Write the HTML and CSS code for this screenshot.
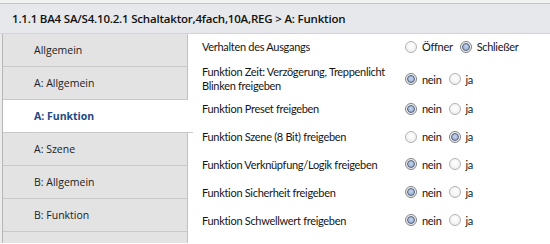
FILE: index.html
```html
<!DOCTYPE html>
<html lang="de">
<head>
<meta charset="utf-8">
<link rel="stylesheet" href="styles.css">
</head>
<body>
<div class="top-strip"></div>
<div class="header">1.1.1 BA4 SA/S4.10.2.1 Schaltaktor,4fach,10A,REG &gt; A: Funktion</div>
<div class="main">
  <nav class="sidebar">
    <div class="item">Allgemein</div>
    <div class="item">A: Allgemein</div>
    <div class="item selected">A: Funktion</div>
    <div class="item">A: Szene</div>
    <div class="item">B: Allgemein</div>
    <div class="item">B: Funktion</div>
    <div class="item"></div>
  </nav>
  <section class="content">
    <div class="row first">
      <div class="label">Verhalten des Ausgangs</div>
      <div class="options">
        <span class="opt"><span class="radio"></span>Öffner</span>
        <span class="opt"><span class="radio checked"></span>Schließer</span>
      </div>
    </div>
    <div class="row two">
      <div class="label">Funktion Zeit: Verzögerung, Treppenlicht<br>Blinken freigeben</div>
      <div class="options">
        <span class="opt"><span class="radio checked"></span>nein</span>
        <span class="opt"><span class="radio"></span>ja</span>
      </div>
    </div>
    <div class="row">
      <div class="label">Funktion Preset freigeben</div>
      <div class="options">
        <span class="opt"><span class="radio checked"></span>nein</span>
        <span class="opt"><span class="radio"></span>ja</span>
      </div>
    </div>
    <div class="row">
      <div class="label">Funktion Szene (8 Bit) freigeben</div>
      <div class="options">
        <span class="opt"><span class="radio"></span>nein</span>
        <span class="opt"><span class="radio checked"></span>ja</span>
      </div>
    </div>
    <div class="row">
      <div class="label">Funktion Verknüpfung/Logik freigeben</div>
      <div class="options">
        <span class="opt"><span class="radio checked"></span>nein</span>
        <span class="opt"><span class="radio"></span>ja</span>
      </div>
    </div>
    <div class="row">
      <div class="label">Funktion Sicherheit freigeben</div>
      <div class="options">
        <span class="opt"><span class="radio checked"></span>nein</span>
        <span class="opt"><span class="radio"></span>ja</span>
      </div>
    </div>
    <div class="row">
      <div class="label">Funktion Schwellwert freigeben</div>
      <div class="options">
        <span class="opt"><span class="radio checked"></span>nein</span>
        <span class="opt"><span class="radio"></span>ja</span>
      </div>
    </div>
  </section>
</div>
</body>
</html>
```

FILE: styles.css
```css
html, body {
  margin: 0;
  padding: 0;
  background: #ffffff;
  width: 550px;
  height: 244px;
  overflow: hidden;
  font-family: "Open Sans", "Noto Sans", sans-serif;
  color: #1e1e1e;
}

.top-strip {
  height: 3px;
  background: #f2f2f2;
  border-bottom: 1px solid #c4c5c8;
}

.header {
  height: 30px;
  box-sizing: border-box;
  padding-left: 12px;
  display: flex;
  align-items: center;
  background: #e7e8eb;
  border-bottom: 1px solid #d3d4d7;
  font-size: 11.5px;
  font-weight: 600;
  color: #111;
  letter-spacing: -0.2px;
  white-space: nowrap;
}

.main {
  display: flex;
  height: 209px;
  overflow: hidden;
  background: #ebebeb;
}

.sidebar {
  width: 184px;
  margin-left: 2px;
  border-left: 1px solid #b7b7b7;
  border-right: 1px solid #c2c2c2;
  background: #e2e2e2;
  display: flex;
  flex-direction: column;
}

.item {
  height: 32px;
  flex: none;
  border-bottom: 1px solid #c9c9c9;
  display: flex;
  align-items: center;
  padding-left: 31px;
  font-size: 10.5px;
  color: #222;
  background: #e3e3e3;
}

.item.selected {
  background: #ffffff;
  color: #1d4a86;
  font-weight: 700;
  margin-right: -6px;
  position: relative;
  z-index: 1;
}

.content {
  flex: 1;
  background: #ffffff;
  padding-left: 14px;
  font-family: "Lato", "Open Sans", sans-serif;
  font-size: 11px;
  letter-spacing: -0.3px;
  color: #161616;
}

.row {
  display: flex;
  align-items: center;
  height: 27.8px;
  box-sizing: border-box;
}

.row.first {
  height: 25px;
}

.row.two {
  height: 36px;
  padding-top: 4px;
}

.row.two .label {
  line-height: 14px;
}

.label {
  width: 203px;
  line-height: 15px;
  white-space: nowrap;
}

.options {
  display: flex;
  align-items: center;
  gap: 7px;
}

.opt {
  display: flex;
  align-items: center;
  gap: 5px;
}

.radio {
  width: 12px;
  height: 12px;
  box-sizing: border-box;
  border-radius: 50%;
  border: 1px solid #b3b3b3;
  background: radial-gradient(circle at 50% 40%, #ffffff 0%, #f3f3f3 60%, #e2e2e2 100%);
  display: flex;
  align-items: center;
  justify-content: center;
}

.radio.checked {
  border-color: #7e7f82;
}

.radio.checked::after {
  content: "";
  width: 8px;
  height: 8px;
  box-sizing: border-box;
  border-radius: 50%;
  border: 1px solid #4d5d7c;
  background: radial-gradient(circle at 50% 40%, #c5d3ea 0%, #a1b4d4 70%, #8ea3c8 100%);
}
```
